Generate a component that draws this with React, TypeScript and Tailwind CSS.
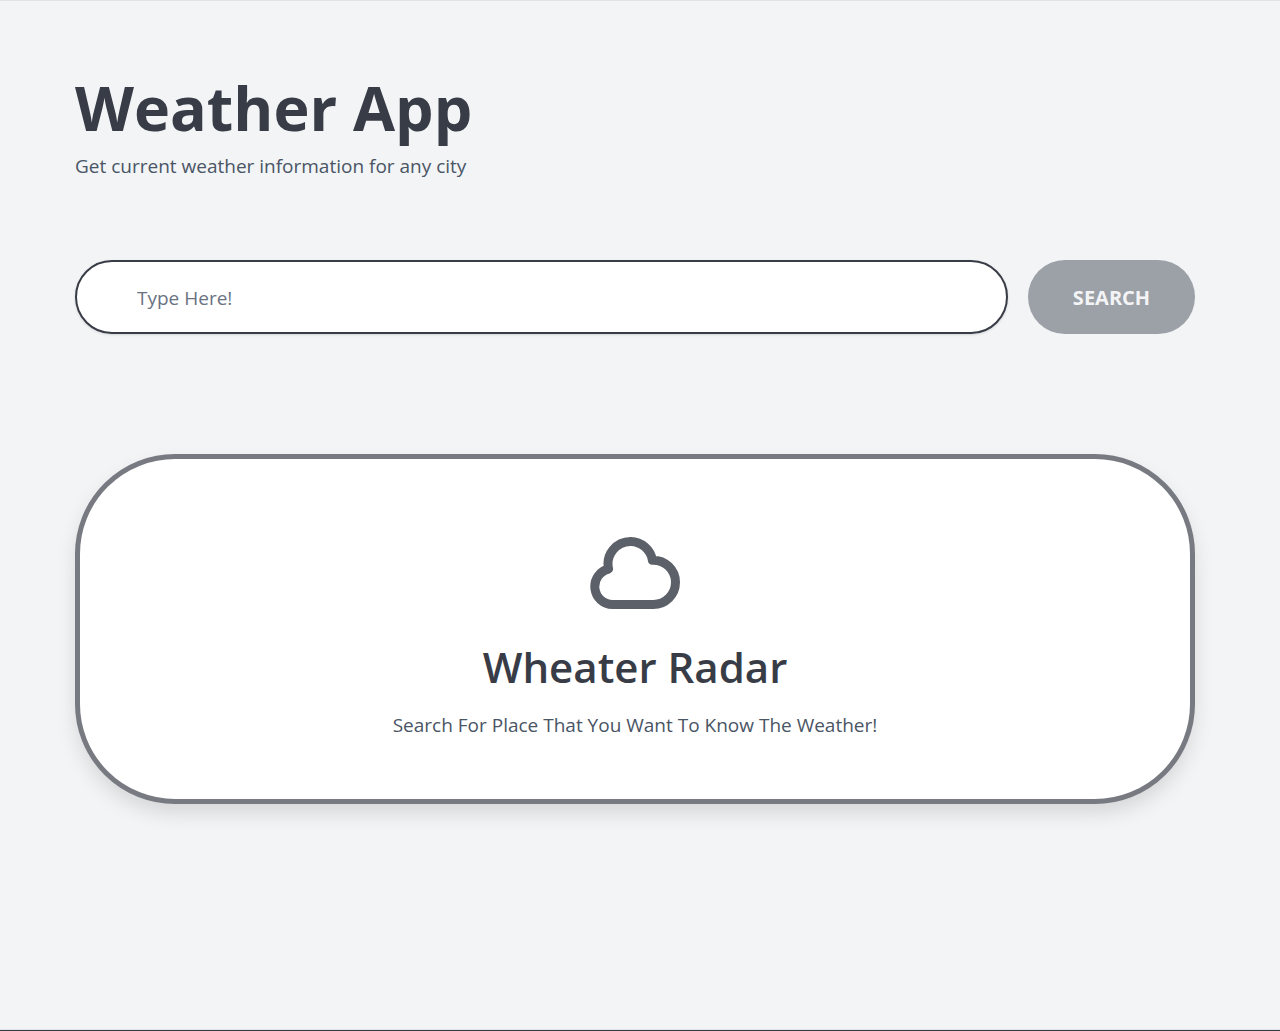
import { useState } from "react";

function CloudIcon() {
  return (
    <svg
      viewBox="0 0 90 90"
      className="size-[90px] text-[#5c6068]"
      fill="none"
      stroke="currentColor"
      strokeWidth="9"
      strokeLinecap="round"
      strokeLinejoin="round"
      aria-hidden="true"
    >
      <path d="M22.5 76.5 A18 18 0 0 1 18.6 41 A22.5 22.5 0 0 1 40.7 13.5 A22.4 22.4 0 0 1 62.4 32.2 A22.3 22.3 0 0 1 85.5 54.3 A22.2 22.2 0 0 1 63.3 76.5 Z" />
    </svg>
  );
}

export default function App() {
  const [city, setCity] = useState("");

  return (
    <div className="flex min-h-screen flex-col border-b border-[#383c46] bg-[#f2f4f6] font-['Open_Sans','Noto_Sans',sans-serif]">
      <main className="flex-1 border-y border-[#e2e3e6] pt-[67px] pr-[85px] pl-[75px]">
        <header>
          <h1 className="text-[61px] leading-20 font-bold text-[#383c46]">Weather App</h1>
          <p className="mt-0.5 text-[19px] leading-8 text-gray-600">Get current weather information for any city</p>
        </header>

        <form className="mt-[78px] flex gap-5" onSubmit={(event) => event.preventDefault()}>
          <input
            type="text"
            aria-label="City"
            placeholder="Type Here!"
            value={city}
            onChange={(event) => setCity(event.target.value)}
            className="h-[74px] min-w-0 flex-1 rounded-full border-2 border-[#383c46] bg-white px-15 pt-0.5 text-[19px] text-gray-700 shadow-sm placeholder:text-gray-500"
          />
          <button
            type="submit"
            disabled={!city}
            className="h-[74px] w-[167px] rounded-full bg-[#383c46] pt-0.5 text-[20px] font-bold text-white disabled:bg-[#9ca0a7] disabled:text-gray-100"
          >
            SEARCH
          </button>
        </form>

        <section className="mt-30 flex flex-col items-center rounded-[100px] border-5 border-[#787a82] bg-white pt-[69px] pb-[58px] text-center shadow-[0_10px_22px_-3px_rgba(0,0,0,0.14)]">
          <CloudIcon />
          <h2 className="mt-[19px] text-[42px] leading-15 font-semibold text-[#383c46]">Wheater Radar</h2>
          <p className="mt-3 text-[19px] leading-8 text-gray-600">Search For Place That You Want To Know The Weather!</p>
        </section>
      </main>
    </div>
  );
}
